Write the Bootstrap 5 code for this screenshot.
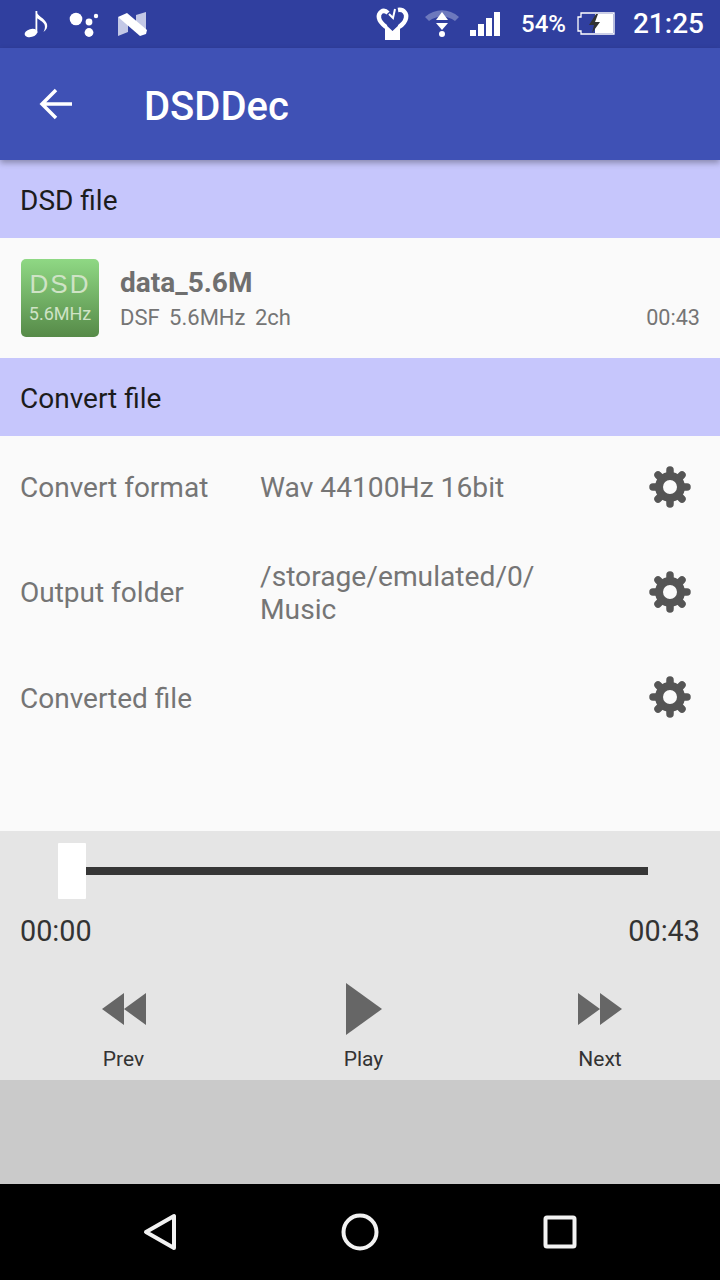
<!doctype html>
<html lang="en"><head><meta charset="utf-8"><title>DSDDec</title>
<link href="https://cdn.jsdelivr.net/npm/bootstrap@5.3.0/dist/css/bootstrap.min.css" rel="stylesheet">
<style>
html,body{margin:0;height:1280px;overflow:hidden}
body{font-family:Roboto,"Liberation Sans",sans-serif;background:#fafafa}
.screen{width:720px;height:1280px}
.statusbar{height:48px;background:#303f9f;color:#fff;font-weight:500}
.sb-right{margin-left:auto}
.sb-pct{font-size:24px;line-height:48px;margin-left:11px}
.sb-batt{margin-left:11px}
.sb-time{font-size:28px;line-height:48px;margin-left:18px;margin-right:16px}
.appbar{height:112px;background:#3f51b5;color:#fff;box-shadow:0 3px 6px rgba(0,0,0,.3);z-index:2}
.back{margin-left:38px}
.appbar-title{font-size:40px;font-weight:500;margin-left:70px;padding-top:6px}
.sect{height:78px;background:#c6c6fc;color:#1c1c1c;font-size:28px;padding-left:20px;padding-top:3px}
.filerow{height:120px;padding:0 20px;background:#fafafa}
.thumb{width:78px;height:78px;border-radius:5px;background:linear-gradient(#8fd884,#568a48);color:#cfe3c6;margin-left:1px;line-height:1;margin-right:21px;flex-shrink:0}
.thumb-a{font-family:"Liberation Sans",sans-serif;font-size:26px;letter-spacing:2px;margin-top:-3px}
.thumb-b{font-size:18px;margin-top:8px}
.fname{font-size:28px;font-weight:700;color:#6f6f6f;line-height:32px;padding-top:2px}
.fmeta,.fdur{font-size:22px;color:#757575;line-height:28px}
.fmeta{word-spacing:4px;margin-top:5px}
.fdur{margin-top:5px;font-size:21.600px}
.settings{height:395px;background:#fafafa;padding:0 20px}
.setrow{height:105.500px;color:#757575;font-size:28px;line-height:33px}
.setrow:first-child{height:103px;margin-bottom:1px}
.set-l{width:240px}
.set-v{width:300px;font-size:28.200px}
.gear{margin-left:auto;margin-right:8px;margin-bottom:2px}
.player{height:249px;background:#e5e5e5;color:#333}
.sliderwrap{height:80px;padding-left:58px}
.knob{width:28px;height:56px;background:#fff;border-radius:1px;margin-top:12px}
.track{width:562px;height:8px;background:#363636;margin-top:36px}
.times{font-size:28.800px;padding:3px 20px 0;line-height:34px;height:40px}
.ctl{font-size:21px;line-height:24px;color:#333}
.ctl-row{height:129px;padding-top:32px}
.ctl-i{height:52px;margin-bottom:12px;display:flex;align-items:center}
.slot-a{width:247px}
.slot-b{width:233px}
.slot-c{width:240px}
.filler{height:104px;background:#cacaca}
.sysnav{height:96px;background:#000}
</style></head><body>
<svg width="0" height="0" class="position-absolute"><defs>
 <g id="cog" fill="none" stroke="#555">
  <circle cx="22" cy="22" r="11" stroke-width="8"/>
  <path stroke-width="7.500" stroke-linecap="round" d="M22 5V9M22 39V35M5 22H9M39 22H35M10 10l3 3M34 34l-3-3M34 10l-3 3M10 34l3-3"/>
 </g>
</defs></svg>
<div class="screen d-flex flex-column">
 <div class="statusbar d-flex align-items-center flex-shrink-0">
  <svg width="160" height="48" viewBox="0 0 160 48">
   <ellipse cx="31" cy="33" rx="6.500" ry="4" transform="rotate(-15 31 33)" fill="#fff"/>
   <rect x="35.500" y="11" width="1.800" height="22" fill="#fff"/>
   <path d="M36 11c1 5 9 7 11 13 .8 3-.5 6-3.500 8 1.500-3 1.800-5 1-7.500-1.200-3-6-5-8.500-7z" fill="#fff"/>
   <circle cx="76" cy="19" r="6.300" fill="#fff"/><circle cx="89" cy="22" r="3.400" fill="#fff"/><circle cx="96" cy="16" r="2.200" fill="#fff"/><circle cx="89" cy="32.500" r="4.400" fill="#fff"/>
   <path d="M118 17l10 5v10l-10 4z" fill="#c3c8e6"/><path d="M136 15l10-3v18l-10-4z" fill="#c3c8e6"/>
   <path d="M118 17l9-4 20 17-1 4-6 2z" fill="#fff"/>
  </svg>
  <div class="sb-right d-flex align-items-center">
   <svg width="140" height="48" viewBox="370 0 140 48">
    <path d="M388 13c-5-5-10 0-9 5 .5 3 3 6 7 9" fill="none" stroke="#fff" stroke-width="4.500"/>
    <path d="M389 14l4 4 2-9" fill="none" stroke="#fff" stroke-width="2"/>
    <path d="M398 10c6-1 9 4 8 8-.8 4-4 7-7 9" fill="none" stroke="#fff" stroke-width="4.500"/>
    <path d="M385 24l7.500 7 7.500-7v16h-15z" fill="#fff"/>
    <path d="M425 17c10-9 24-9 34 0l-4 4c-8-6-18-6-26 0z" fill="#6d79bd"/>
    <path d="M436 20l6-8 6 8z" fill="#fff"/><path d="M436 23h12l-6 7z" fill="#fff"/>
    <circle cx="442" cy="34" r="3" fill="#fff"/>
    <path d="M470 30h6v6h-6zM478 24h6v12h-6zM486 18h6v18h-6zM494 12h6v24h-6z" fill="#fff"/>
   </svg>
   <span class="sb-pct">54%</span>
   <svg class="sb-batt" width="38" height="48" viewBox="0 0 38 48">
    <path d="M1 17h3v-4h33v21H4v-3H1z" fill="none" stroke="#fff" stroke-width="1.300"/>
    <rect x="18" y="14" width="18" height="19" fill="#fff"/>
    <path d="M19 14l-7 11h5l-2 8 8-11h-5l3-8z" fill="#333"/>
   </svg>
   <span class="sb-time">21:25</span>
  </div>
 </div>
 <div class="appbar d-flex align-items-center flex-shrink-0">
  <svg class="back" width="36" height="36" viewBox="0 0 36 36"><path d="M34 18H6M18 4L4 18l14 14" fill="none" stroke="#fff" stroke-width="3.500"/></svg>
  <div class="appbar-title">DSDDec</div>
 </div>
 <div class="sect d-flex align-items-center flex-shrink-0">DSD file</div>
 <div class="filerow d-flex align-items-center flex-shrink-0">
  <div class="thumb d-flex flex-column align-items-center justify-content-center"><div class="thumb-a">DSD</div><div class="thumb-b">5.6MHz</div></div>
  <div class="flex-grow-1">
   <div class="fname">data_5.6M</div>
   <div class="d-flex justify-content-between"><div class="fmeta">DSF 5.6MHz 2ch</div><div class="fdur">00:43</div></div>
  </div>
 </div>
 <div class="sect d-flex align-items-center flex-shrink-0">Convert file</div>
 <div class="settings flex-shrink-0">
  <div class="setrow d-flex align-items-center"><div class="set-l">Convert format</div><div class="set-v">Wav 44100Hz 16bit</div>
   <svg class="gear" width="44" height="44" viewBox="0 0 44 44"><use href="#cog"/></svg></div>
  <div class="setrow d-flex align-items-center"><div class="set-l">Output folder</div><div class="set-v">/storage/emulated/0/ Music</div>
   <svg class="gear" width="44" height="44" viewBox="0 0 44 44"><use href="#cog"/></svg></div>
  <div class="setrow d-flex align-items-center"><div class="set-l">Converted file</div><div class="set-v"></div>
   <svg class="gear" width="44" height="44" viewBox="0 0 44 44"><use href="#cog"/></svg></div>
 </div>
 <div class="player flex-shrink-0">
  <div class="sliderwrap d-flex"><div class="knob"></div><div class="track"></div></div>
  <div class="times d-flex justify-content-between"><span>00:00</span><span>00:43</span></div>
  <div class="ctl-row d-flex">
   <div class="slot-a d-flex flex-column align-items-center text-center"><div class="ctl-i"><svg width="44" height="32" viewBox="0 0 44 32"><path d="M0 16L22 0v32zM22 16L44 0v32z" fill="#666"/></svg></div><div class="ctl">Prev</div></div>
   <div class="slot-b d-flex flex-column align-items-center text-center"><div class="ctl-i"><svg width="36" height="52" viewBox="0 0 36 52"><path d="M0 0l36 26L0 52z" fill="#666"/></svg></div><div class="ctl">Play</div></div>
   <div class="slot-c d-flex flex-column align-items-center text-center"><div class="ctl-i"><svg width="44" height="32" viewBox="0 0 44 32"><path d="M0 0l22 16L0 32zM22 0l22 16-22 16z" fill="#666"/></svg></div><div class="ctl">Next</div></div>
  </div>
 </div>
 <div class="filler flex-shrink-0"></div>
 <div class="sysnav d-flex flex-shrink-0 align-items-center">
  <svg width="720" height="96" viewBox="0 0 720 96">
   <path d="M174 32v32l-28-16z" fill="none" stroke="#f2f2f2" stroke-width="4" stroke-linejoin="round"/>
   <circle cx="360" cy="48" r="16.500" fill="none" stroke="#f2f2f2" stroke-width="4"/>
   <rect x="545.500" y="33.500" width="29" height="29" rx="1.500" fill="none" stroke="#f2f2f2" stroke-width="4"/>
  </svg>
 </div>
</div>
</body></html>
